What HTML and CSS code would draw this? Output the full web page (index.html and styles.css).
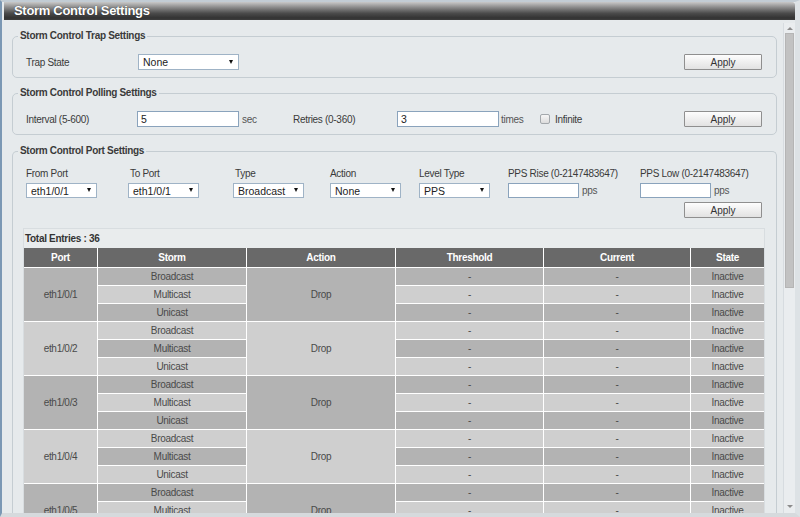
FILE: index.html
```html
<!DOCTYPE html>
<html>
<head>
<meta charset="utf-8">
<title>Storm Control Settings</title>
<link rel="stylesheet" href="styles.css">
</head>
<body>
<div class="frame">
  <div class="titlebar">Storm Control Settings</div>
  <div class="main">
    <div class="content">
      <fieldset class="fs fs-trap">
        <legend>Storm Control Trap Settings</legend>
        <div class="row">
          <span class="lbl w112">Trap State</span>
          <div class="sel w101"><span>None</span><i class="caret"></i></div>
          <button class="btn">Apply</button>
        </div>
      </fieldset>

      <fieldset class="fs fs-poll">
        <legend>Storm Control Polling Settings</legend>
        <div class="row">
          <span class="lbl w111">Interval (5-600)</span>
          <input class="txt w102" type="text" value="5">
          <span class="unit u-sec">sec</span>
          <span class="lbl w104">Retries (0-360)</span>
          <input class="txt w102" type="text" value="3">
          <span class="unit u-times">times</span>
          <span class="chk"></span>
          <span class="lbl">Infinite</span>
          <button class="btn">Apply</button>
        </div>
      </fieldset>

      <fieldset class="fs fs-port">
        <legend>Storm Control Port Settings</legend>
        <div class="ports">
          <div class="pcol"><div class="plbl">From Port</div><div class="sel ps"><span>eth1/0/1</span><i class="caret"></i></div></div>
          <div class="pcol"><div class="plbl ind">To Port</div><div class="sel ps"><span>eth1/0/1</span><i class="caret"></i></div></div>
          <div class="pcol"><div class="plbl ind">Type</div><div class="sel ps"><span>Broadcast</span><i class="caret"></i></div></div>
          <div class="pcol"><div class="plbl">Action</div><div class="sel ps"><span>None</span><i class="caret"></i></div></div>
          <div class="pcol"><div class="plbl">Level Type</div><div class="sel ps"><span>PPS</span><i class="caret"></i></div></div>
          <div class="pcol"><div class="plbl">PPS Rise (0-2147483647)</div><div class="inrow"><input class="txt ps" type="text"><span class="unit">pps</span></div></div>
          <div class="pcol"><div class="plbl">PPS Low (0-2147483647)</div><div class="inrow"><input class="txt ps" type="text"><span class="unit">pps</span></div></div>
        </div>
        <div class="btnrow"><button class="btn">Apply</button></div>

        <div class="tablebox">
          <div class="total">Total Entries : 36</div>
          <table class="tbl">
            <colgroup><col class="c1"><col class="c2"><col class="c3"><col class="c4"><col class="c5"><col class="c6"></colgroup>
            <thead>
              <tr><th>Port</th><th>Storm</th><th>Action</th><th>Threshold</th><th>Current</th><th class="last">State</th></tr>
            </thead>
            <tbody>
              <tr class="d"><td rowspan="3" class="gd">eth1/0/1</td><td>Broadcast</td><td rowspan="3" class="gd">Drop</td><td>-</td><td>-</td><td class="last">Inactive</td></tr>
              <tr class="l"><td>Multicast</td><td>-</td><td>-</td><td class="last">Inactive</td></tr>
              <tr class="d"><td>Unicast</td><td>-</td><td>-</td><td class="last">Inactive</td></tr>

              <tr class="l"><td rowspan="3" class="gl">eth1/0/2</td><td>Broadcast</td><td rowspan="3" class="gl">Drop</td><td>-</td><td>-</td><td class="last">Inactive</td></tr>
              <tr class="d"><td>Multicast</td><td>-</td><td>-</td><td class="last">Inactive</td></tr>
              <tr class="l"><td>Unicast</td><td>-</td><td>-</td><td class="last">Inactive</td></tr>

              <tr class="d"><td rowspan="3" class="gd">eth1/0/3</td><td>Broadcast</td><td rowspan="3" class="gd">Drop</td><td>-</td><td>-</td><td class="last">Inactive</td></tr>
              <tr class="l"><td>Multicast</td><td>-</td><td>-</td><td class="last">Inactive</td></tr>
              <tr class="d"><td>Unicast</td><td>-</td><td>-</td><td class="last">Inactive</td></tr>

              <tr class="l"><td rowspan="3" class="gl">eth1/0/4</td><td>Broadcast</td><td rowspan="3" class="gl">Drop</td><td>-</td><td>-</td><td class="last">Inactive</td></tr>
              <tr class="d"><td>Multicast</td><td>-</td><td>-</td><td class="last">Inactive</td></tr>
              <tr class="l"><td>Unicast</td><td>-</td><td>-</td><td class="last">Inactive</td></tr>

              <tr class="d"><td rowspan="3" class="gd">eth1/0/5</td><td>Broadcast</td><td rowspan="3" class="gd">Drop</td><td>-</td><td>-</td><td class="last">Inactive</td></tr>
              <tr class="l"><td>Multicast</td><td>-</td><td>-</td><td class="last">Inactive</td></tr>
              <tr class="d"><td>Unicast</td><td>-</td><td>-</td><td class="last">Inactive</td></tr>

              <tr class="l"><td rowspan="3" class="gl">eth1/0/6</td><td>Broadcast</td><td rowspan="3" class="gl">Drop</td><td>-</td><td>-</td><td class="last">Inactive</td></tr>
              <tr class="d"><td>Multicast</td><td>-</td><td>-</td><td class="last">Inactive</td></tr>
              <tr class="l"><td>Unicast</td><td>-</td><td>-</td><td class="last">Inactive</td></tr>
            </tbody>
          </table>
        </div>
      </fieldset>
    </div>
    <div class="scroll">
      <i class="arr-up"></i>
      <div class="thumb"></div>
      <div class="spacer"></div>
      <i class="arr-down"></i>
    </div>
  </div>
</div>
</body>
</html>
```

FILE: styles.css
```css
* { box-sizing: border-box; }
html, body { margin: 0; padding: 0; }
body {
  width: 800px;
  height: 517px;
  overflow: hidden;
  font-family: "Liberation Sans", Arial, sans-serif;
  background: #e6eaec;
  color: #3a3a3a;
}

.frame {
  width: 800px;
  height: 517px;
  display: flex;
  flex-direction: column;
  border-top: 2px solid #c2ccd4;
  border-left: 2px solid #7b98b4;
  border-right: 5px solid #dde2e5;
  border-bottom: 4px solid #d6dadd;
  background: #e6eaec;
  overflow: hidden;
}

.titlebar {
  height: 18px;
  margin-left: 2px;
  flex: 0 0 18px;
  background: linear-gradient(to bottom, #c8c8c8 0%, #8e8e8e 28%, #4c4c4c 62%, #333333 88%, #3d3d3d 100%);
  border-radius: 0 3px 0 0;
  color: #fff;
  font-weight: bold;
  font-size: 13px;
  letter-spacing: -0.3px;
  line-height: 18px;
  padding-left: 10px;
  text-shadow: 0 0 1px #222;
}

.main {
  flex: 1;
  display: flex;
  min-height: 0;
}

.content {
  flex: 1;
  min-width: 0;
  overflow: hidden;
  padding-top: 9px;
}

/* fieldsets */
.fs {
  margin: 0 6px 0 10px;
  padding: 11px 11px 7px 10px;
  border: 1px solid #c5cdd2;
  border-radius: 5px;
  min-width: 0;
}
.fs legend {
  font-size: 10px;
  font-weight: bold;
  letter-spacing: -0.3px;
  line-height: 14px;
  padding: 0 2px;
  margin-left: -5px;
  color: #3a3a3a;
}
.fs-poll { margin-top: 8px; }
.fs-port { margin-top: 9px; padding-top: 10px; padding-bottom: 0; border-bottom: none; border-radius: 5px 5px 0 0; }

.row {
  display: flex;
  align-items: center;
  height: 16px;
  padding-left: 3px;
  font-size: 10px;
  letter-spacing: -0.3px;
}
.lbl { color: #3a3a3a; white-space: nowrap; }
.w111 { width: 111px; }
.w112 { width: 112px; }
.w104 { width: 104px; }
.w101 { width: 101px; }
.w102 { width: 102px; }

.unit { color: #555; font-size: 10px; letter-spacing: -0.3px; }
.u-sec { margin-left: 3px; width: 51px; }
.u-times { margin-left: 2px; width: 39px; }

.chk {
  width: 10px;
  height: 10px;
  border: 1px solid #a3a8ac;
  border-radius: 2px;
  background: linear-gradient(#f6f6f6, #dcdcdc);
  margin-right: 5px;
}

/* fake select */
.sel {
  height: 16px;
  display: flex;
  align-items: center;
  justify-content: space-between;
  background: #fff;
  border: 1px solid #9fb3c6;
  padding: 0 5px 0 4px;
  font-size: 10.5px;
  color: #222;
  letter-spacing: 0;
}
.caret {
  width: 0;
  height: 0;
  border-left: 2.5px solid transparent;
  border-right: 2.5px solid transparent;
  border-top: 4px solid #111;
  margin-top: -1px;
}

.txt {
  height: 16px;
  border: 1px solid #8aa3bc;
  background: #fff;
  font-family: "Liberation Sans", Arial, sans-serif;
  font-size: 10.5px;
  color: #222;
  padding: 0 3px;
  margin: 0;
  outline: none;
}

.btn {
  margin-left: auto;
  margin-right: 3px;
  width: 78px;
  height: 16px;
  padding: 0;
  border: 1px solid #8f8f8f;
  border-radius: 1px;
  background: linear-gradient(#fdfdfd, #e2e2e2);
  font-family: "Liberation Sans", Arial, sans-serif;
  font-size: 10px;
  color: #333;
}

/* port settings */
.ports {
  display: grid;
  grid-template-columns: 102px 105px 97px 89px 89px 132px 1fr;
  padding-left: 3px;
}
.plbl {
  font-size: 10px;
  letter-spacing: -0.3px;
  line-height: 12px;
  height: 12px;
  margin-bottom: 3px;
  color: #3a3a3a;
  white-space: nowrap;
}
.plbl.ind { padding-left: 2px; }
.sel.ps, .txt.ps { width: 71px; height: 15px; }
.inrow { display: flex; align-items: center; }
.inrow .unit { margin-left: 3px; }

.btnrow {
  display: flex;
  margin-top: 4px;
  height: 16px;
}

/* table */
.tablebox {
  margin-top: 10px;
  border: 1px solid #d8dde0;
  border-bottom: none;
  background: #e9eced;
}
.total {
  height: 19px;
  line-height: 19px;
  padding-left: 1px;
  font-size: 10px;
  font-weight: bold;
  letter-spacing: -0.3px;
  color: #333;
}
.tbl {
  width: 740px;
  table-layout: fixed;
  border-collapse: separate;
  border-spacing: 0;
  font-size: 10px;
  letter-spacing: -0.3px;
}
.c1 { width: 74px; }
.c2 { width: 149px; }
.c3 { width: 149px; }
.c4 { width: 148px; }
.c5 { width: 147px; }
.c6 { width: 73px; }

.tbl th, .tbl td {
  box-sizing: content-box;
  padding: 0;
  text-align: center;
  border-right: 1px solid #fff;
  border-bottom: 1px solid #fff;
  white-space: nowrap;
}
.tbl th.last, .tbl td.last { border-right: none; }
.tbl th {
  height: 19px;
  background: #696969;
  color: #fff;
  font-weight: bold;
}
.tbl td {
  height: 17px;
  color: #4a4a4a;
}
.tbl tr.d td { background: #b3b3b3; }
.tbl tr.l td { background: #cfcfcf; }
.tbl tr td.gd { background: #b3b3b3; }
.tbl tr td.gl { background: #cfcfcf; }

/* scrollbar */
.scroll {
  width: 12px;
  flex: 0 0 12px;
  margin-top: 3px;
  background: #eaedef;
  border-left: 1px solid #d7dce0;
  display: flex;
  flex-direction: column;
  align-items: center;
  padding-top: 4px;
  padding-bottom: 5px;
}
.arr-up, .arr-down {
  width: 0;
  height: 0;
  border-left: 3px solid transparent;
  border-right: 3px solid transparent;
}
.arr-up { border-bottom: 3px solid #8c8c8c; }
.arr-down { border-top: 3px solid #8c8c8c; }
.thumb {
  margin-top: 3px;
  width: 9px;
  height: 255px;
  background: #c2c2c2;
  border: 1px solid #b5b5b5;
}
.spacer { flex: 1; }
```
